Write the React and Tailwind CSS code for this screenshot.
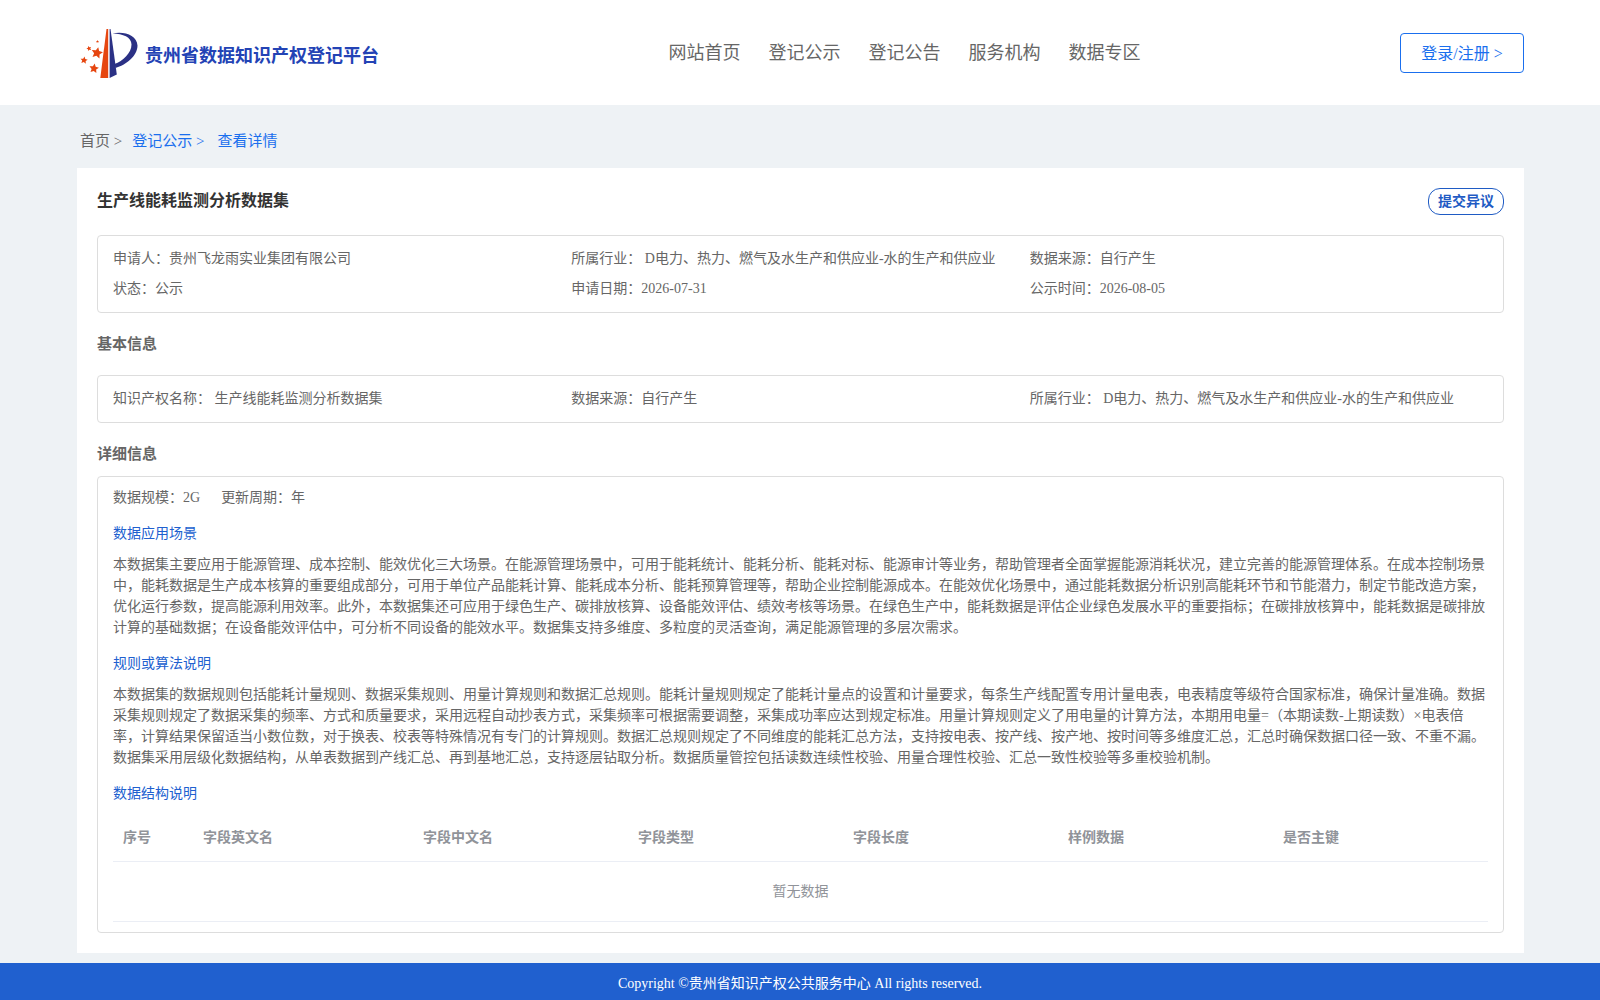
import React from 'react';

const navItems = ['网站首页', '登记公示', '登记公告', '服务机构', '数据专区'];

const summary = [
  '申请人：贵州飞龙雨实业集团有限公司',
  '所属行业： D电力、热力、燃气及水生产和供应业-水的生产和供应业',
  '数据来源：自行产生',
  '状态：公示',
  '申请日期：2026-07-31',
  '公示时间：2026-08-05',
];

const basicInfo = [
  '知识产权名称： 生产线能耗监测分析数据集',
  '数据来源：自行产生',
  '所属行业： D电力、热力、燃气及水生产和供应业-水的生产和供应业',
];

const details = [
  {
    title: '数据应用场景',
    text: '本数据集主要应用于能源管理、成本控制、能效优化三大场景。在能源管理场景中，可用于能耗统计、能耗分析、能耗对标、能源审计等业务，帮助管理者全面掌握能源消耗状况，建立完善的能源管理体系。在成本控制场景中，能耗数据是生产成本核算的重要组成部分，可用于单位产品能耗计算、能耗成本分析、能耗预算管理等，帮助企业控制能源成本。在能效优化场景中，通过能耗数据分析识别高能耗环节和节能潜力，制定节能改造方案，优化运行参数，提高能源利用效率。此外，本数据集还可应用于绿色生产、碳排放核算、设备能效评估、绩效考核等场景。在绿色生产中，能耗数据是评估企业绿色发展水平的重要指标；在碳排放核算中，能耗数据是碳排放计算的基础数据；在设备能效评估中，可分析不同设备的能效水平。数据集支持多维度、多粒度的灵活查询，满足能源管理的多层次需求。',
  },
  {
    title: '规则或算法说明',
    text: '本数据集的数据规则包括能耗计量规则、数据采集规则、用量计算规则和数据汇总规则。能耗计量规则规定了能耗计量点的设置和计量要求，每条生产线配置专用计量电表，电表精度等级符合国家标准，确保计量准确。数据采集规则规定了数据采集的频率、方式和质量要求，采用远程自动抄表方式，采集频率可根据需要调整，采集成功率应达到规定标准。用量计算规则定义了用电量的计算方法，本期用电量=（本期读数-上期读数）×电表倍率，计算结果保留适当小数位数，对于换表、校表等特殊情况有专门的计算规则。数据汇总规则规定了不同维度的能耗汇总方法，支持按电表、按产线、按产地、按时间等多维度汇总，汇总时确保数据口径一致、不重不漏。数据集采用层级化数据结构，从单表数据到产线汇总、再到基地汇总，支持逐层钻取分析。数据质量管控包括读数连续性校验、用量合理性校验、汇总一致性校验等多重校验机制。',
  },
];

const columns = ['序号', '字段英文名', '字段中文名', '字段类型', '字段长度', '样例数据', '是否主键'];

const Star = ({ x, y, r, rotate = 0 }) => (
  <path
    transform={`translate(${x} ${y}) rotate(${rotate}) scale(${r})`}
    d="M0-1 .28-.39 .95-.31 .46.15 .59.81 0 .48-.59.81-.46.15-.95-.31-.28-.39Z"
  />
);

const Logo = () => (
  <svg viewBox="0 0 58 50" className="h-[50px] w-[58px] shrink-0" aria-hidden="true">
    <g fill="#e64610">
      <path d="M26.5 0h1.7v49h-7.9Z" />
      <Star x={17} y={24} r={6} rotate={12} />
      <Star x={4} y={31.3} r={3.8} rotate={8} />
      <Star x={14} y={39.5} r={5} rotate={8} />
      <Star x={9} y={19.5} r={2.6} rotate={-20} />
      <Star x={17.5} y={12.5} r={1.6} />
    </g>
    <g fill="#2b3185">
      <path d="M29.6 0h.9l6.3 45.5-7.2 3.5Z" />
      <path d="M32.5 4.5C44 2 57 6 57.500 16.500C57.500 27 46 36 35.500 39L34.500 35C43 32 51.500 24 51.500 15.500C51.500 8 43 4.800 32.500 4.500Z" />
    </g>
  </svg>
);

const InfoBox = ({ items }) => (
  <div className="grid grid-cols-3 rounded border border-[#ddd] px-[15px] py-2">
    {items.map((item) => (
      <div key={item} className="leading-[30px]">{item}</div>
    ))}
  </div>
);

const Header = () => (
  <header className="flex h-[105px] items-center justify-between bg-white pr-[76px] pl-20">
    <a href="#home" className="flex items-center gap-[7px] pt-[2px]">
      <Logo />
      <span className="pt-1 text-lg font-bold text-[#2343b5]">贵州省数据知识产权登记平台</span>
    </a>
    <nav className="flex gap-7 pl-[30px]">
      {navItems.map((item) => (
        <a key={item} href="#nav" className="text-lg">{item}</a>
      ))}
    </nav>
    <button className="h-10 w-[124px] rounded border border-[#1a6fee] pt-[2px] text-base text-[#1a6fee]">
      登录/注册 &gt;
    </button>
  </header>
);

export default function App() {
  return (
    <div className="min-h-screen bg-[#eef2f5] font-['Liberation_Serif','Noto_Sans_CJK_SC',serif] text-sm text-[#666]">
      <Header />

      <main className="pr-[76px] pb-[10px] pl-[77px]">
        <div className="flex h-[63px] items-center pt-[11px] pl-[3px] text-[15px]">
          <a href="#home">首页 &gt;</a>
          <a href="#list" className="ml-[10px] text-[#1a6fee]">登记公示 &gt;</a>
          <span className="ml-[13px] text-[#1a6fee]">查看详情</span>
        </div>

        <div className="bg-white p-5">
          <div className="flex h-[47px] items-start justify-between">
            <h1 className="text-base leading-[26px] font-bold text-[#333]">生产线能耗监测分析数据集</h1>
            <button className="h-[27px] w-[76px] rounded-xl border border-[#1f5bc4] font-bold text-[#1f5bc4]">
              提交异议
            </button>
          </div>

          <InfoBox items={summary} />

          <h2 className="h-[62px] pt-5 text-[15px] leading-[22px] font-bold">基本信息</h2>
          <InfoBox items={basicInfo} />

          <h2 className="h-[53px] pt-5 text-[15px] leading-[22px] font-bold">详细信息</h2>
          <div className="rounded border border-[#ddd] px-[15px] py-[10px] leading-[21px]">
            <div className="flex gap-[21px]">
              <span>数据规模：2G</span>
              <span>更新周期：年</span>
            </div>

            {details.map((section) => (
              <section key={section.title}>
                <h3 className="pt-[15px] pb-[10px] text-[#2060cf]">{section.title}</h3>
                <p>{section.text}</p>
              </section>
            ))}

            <h3 className="pt-[15px] pb-[10px] text-[#2060cf]">数据结构说明</h3>
            <table className="w-full table-fixed text-left text-[#909399]">
              <colgroup>
                <col className="w-20" />
                <col className="w-[220px]" />
                <col span={5} />
              </colgroup>
              <thead>
                <tr className="h-[47px] border-b border-[#ebeef5]">
                  {columns.map((name) => (
                    <th key={name} className="px-[10px] font-bold">{name}</th>
                  ))}
                </tr>
              </thead>
              <tbody>
                <tr className="h-[60px] border-b border-[#ebeef5]">
                  <td colSpan={columns.length} className="text-center">暂无数据</td>
                </tr>
              </tbody>
            </table>
          </div>
        </div>
      </main>

      <footer className="bg-[#2060cf] py-[11px] text-center text-white">
        Copyright ©贵州省知识产权公共服务中心 All rights reserved.
      </footer>
    </div>
  );
}
